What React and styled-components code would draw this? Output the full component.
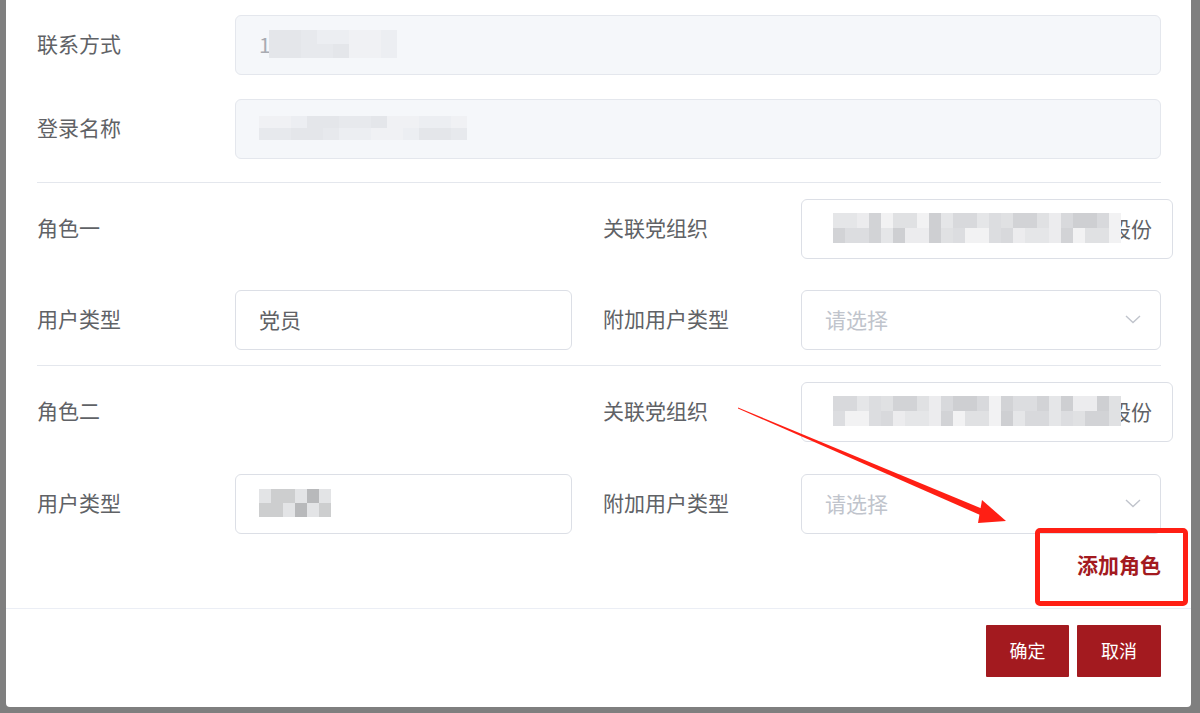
import React from "react";
import styled, { createGlobalStyle } from "styled-components";

const Global = createGlobalStyle`
  html, body { margin: 0; padding: 0; }
  body {
    background: #7f7f7f;
    font-family: "Noto Sans CJK SC", "Noto Sans", "Liberation Sans", sans-serif;
    overflow: hidden;
  }
`;

const Page = styled.div`
  position: relative;
  width: 1200px;
  height: 713px;
  overflow: hidden;
  background: #7f7f7f;
`;

const Modal = styled.div`
  margin-left: 6px;
  width: 1185px;
  height: 707px;
  background: #fff;
  border-radius: 0 0 4px 4px;
  display: flex;
  flex-direction: column;
  box-sizing: border-box;
`;

const Body = styled.div`
  padding: 15px 30px 0 31px;
  display: flex;
  flex-direction: column;
`;

const FullRow = styled.div`
  display: grid;
  grid-template-columns: 198px 1fr;
  align-items: center;
  margin-bottom: ${(p) => p.$mb || 0}px;
`;

const HalfRow = styled.div`
  display: grid;
  grid-template-columns: 535px 1fr;
  column-gap: 31px;
  align-items: center;
  margin-bottom: ${(p) => p.$mb || 0}px;
`;

const Field = styled.div`
  display: grid;
  grid-template-columns: 198px 1fr;
  align-items: center;
  min-height: 60px;
`;

const Label = styled.div`
  font-size: 21px;
  color: #606266;
  line-height: 28px;
  padding-bottom: 4px;
  white-space: nowrap;
`;

const Input = styled.div`
  height: 60px;
  box-sizing: border-box;
  border: 1px solid ${(p) => (p.$disabled ? "#e4e7ed" : "#dcdfe6")};
  background: ${(p) => (p.$disabled ? "#f5f7fa" : "#fff")};
  border-radius: 6px;
  padding: 0 20px 2px 23px;
  display: flex;
  align-items: center;
  font-size: 21px;
  color: ${(p) => (p.$disabled ? "#a8abb2" : "#606266")};
  white-space: nowrap;
`;

const Placeholder = styled.span`
  color: #c0c4cc;
  flex: 1;
`;

const Chevron = styled.svg`
  width: 18px;
  height: 18px;
  flex: none;
  margin-right: -2px;
`;

const Divider = styled.div`
  height: 1px;
  background: #e4e7ed;
  margin-bottom: 16px;
`;

const Mosaic = styled.div`
  position: relative;
  z-index: 1;
  display: grid;
  grid-template-columns: repeat(${(p) => p.$cols}, ${(p) => p.$cell}px);
  grid-auto-rows: ${(p) => p.$rowH}px;
  flex: none;
  margin-left: ${(p) => p.$ml || 0}px;
`;

const Cell = styled.div`
  background: ${(p) => p.$c};
`;

const Tail = styled.span`
  flex: none;
  margin-left: -11px;
  color: #606266;
`;

const AddRow = styled.div`
  display: flex;
  justify-content: flex-end;
  margin-top: 16px;
  padding-bottom: 30px;
`;

const AddLink = styled.span`
  font-size: 21px;
  font-weight: 700;
  color: #a31a1f;
  line-height: 28px;
`;

const Footer = styled.div`
  border-top: 1px solid #ebeef5;
  display: flex;
  justify-content: flex-end;
  gap: 8px;
  padding: 16px 30px 0 0;
`;

const Button = styled.button`
  height: 52px;
  width: ${(p) => p.$w}px;
  border: none;
  border-radius: 1px;
  background: #a31a1f;
  color: #fff;
  font-family: inherit;
  font-size: 18px;
  padding: 0 0 2px;
`;

const Annotation = styled.svg`
  position: absolute;
  left: 0;
  top: 0;
  pointer-events: none;
`;

const RedBox = styled.div`
  position: absolute;
  left: 1035px;
  top: 528px;
  width: 153px;
  height: 78px;
  box-sizing: border-box;
  border: 5px solid #ff1f14;
  border-radius: 5px;
  pointer-events: none;
`;

function Blur({ cols, rows, cell, rowH, seed, ml, base }) {
  const cells = [];
  for (let i = 0; i < cols * rows; i++) {
    const k = (i * 7 + seed * 3 + ((i * i) % 5)) % base.length;
    cells.push(<Cell key={i} $c={base[k]} />);
  }
  return (
    <Mosaic $cols={cols} $cell={cell} $rowH={rowH} $ml={ml}>
      {cells}
    </Mosaic>
  );
}

const ChevronDown = () => (
  <Chevron viewBox="0 0 18 18">
    <path d="M2 6 L9 12.5 L16 6" fill="none" stroke="#c0c4cc" strokeWidth="1.4" />
  </Chevron>
);

const lightBase = ["#eceef2", "#e7e9ed", "#f0f1f4", "#e4e6ea"];
const orgBase = ["#dcdde0", "#e5e6e8", "#d2d3d6", "#ececee", "#e0e1e3", "#cecfd2", "#f2f2f3", "#d8d9dc"];
const typeBase = ["#d8d9db", "#cdcecf", "#b8b9bb", "#e3e4e6", "#d3d4d6"];

export default function App() {
  return (
    <Page>
      <Global />
      <Modal>
        <Body>
          <FullRow $mb={24}>
            <Label>联系方式</Label>
            <Input $disabled>
              1
              <Blur cols={8} rows={2} cell={16} rowH={14} seed={1} ml={-2} base={lightBase} />
            </Input>
          </FullRow>
          <FullRow $mb={23}>
            <Label>登录名称</Label>
            <Input $disabled>
              <Blur cols={13} rows={2} cell={16} rowH={12} seed={2} ml={0} base={lightBase} />
            </Input>
          </FullRow>
          <Divider />
          <HalfRow $mb={31}>
            <Field>
              <Label>角色一</Label>
            </Field>
            <Field>
              <Label>关联党组织</Label>
              <Input>
                <Blur cols={24} rows={2} cell={12} rowH={15} seed={3} ml={8} base={orgBase} />
                <Tail>股份</Tail>
              </Input>
            </Field>
          </HalfRow>
          <HalfRow $mb={15}>
            <Field>
              <Label>用户类型</Label>
              <Input>党员</Input>
            </Field>
            <Field>
              <Label>附加用户类型</Label>
              <Input>
                <Placeholder>请选择</Placeholder>
                <ChevronDown />
              </Input>
            </Field>
          </HalfRow>
          <Divider />
          <HalfRow $mb={32}>
            <Field>
              <Label>角色二</Label>
            </Field>
            <Field>
              <Label>关联党组织</Label>
              <Input>
                <Blur cols={24} rows={2} cell={12} rowH={15} seed={5} ml={8} base={orgBase} />
                <Tail>股份</Tail>
              </Input>
            </Field>
          </HalfRow>
          <HalfRow>
            <Field>
              <Label>用户类型</Label>
              <Input>
                <Blur cols={6} rows={2} cell={12} rowH={14} seed={1} base={typeBase} />
              </Input>
            </Field>
            <Field>
              <Label>附加用户类型</Label>
              <Input>
                <Placeholder>请选择</Placeholder>
                <ChevronDown />
              </Input>
            </Field>
          </HalfRow>
          <AddRow>
            <AddLink>添加角色</AddLink>
          </AddRow>
        </Body>
        <Footer>
          <Button $w={83}>确定</Button>
          <Button $w={84}>取消</Button>
        </Footer>
      </Modal>
      <Annotation width="1200" height="713" viewBox="0 0 1200 713">
        <polygon points="738,407.5 990,512 987,518 738,408.5" fill="#ff1f14" />
        <polygon points="1006,521 982,500 978,523" fill="#ff1f14" />
      </Annotation>
      <RedBox />
    </Page>
  );
}
